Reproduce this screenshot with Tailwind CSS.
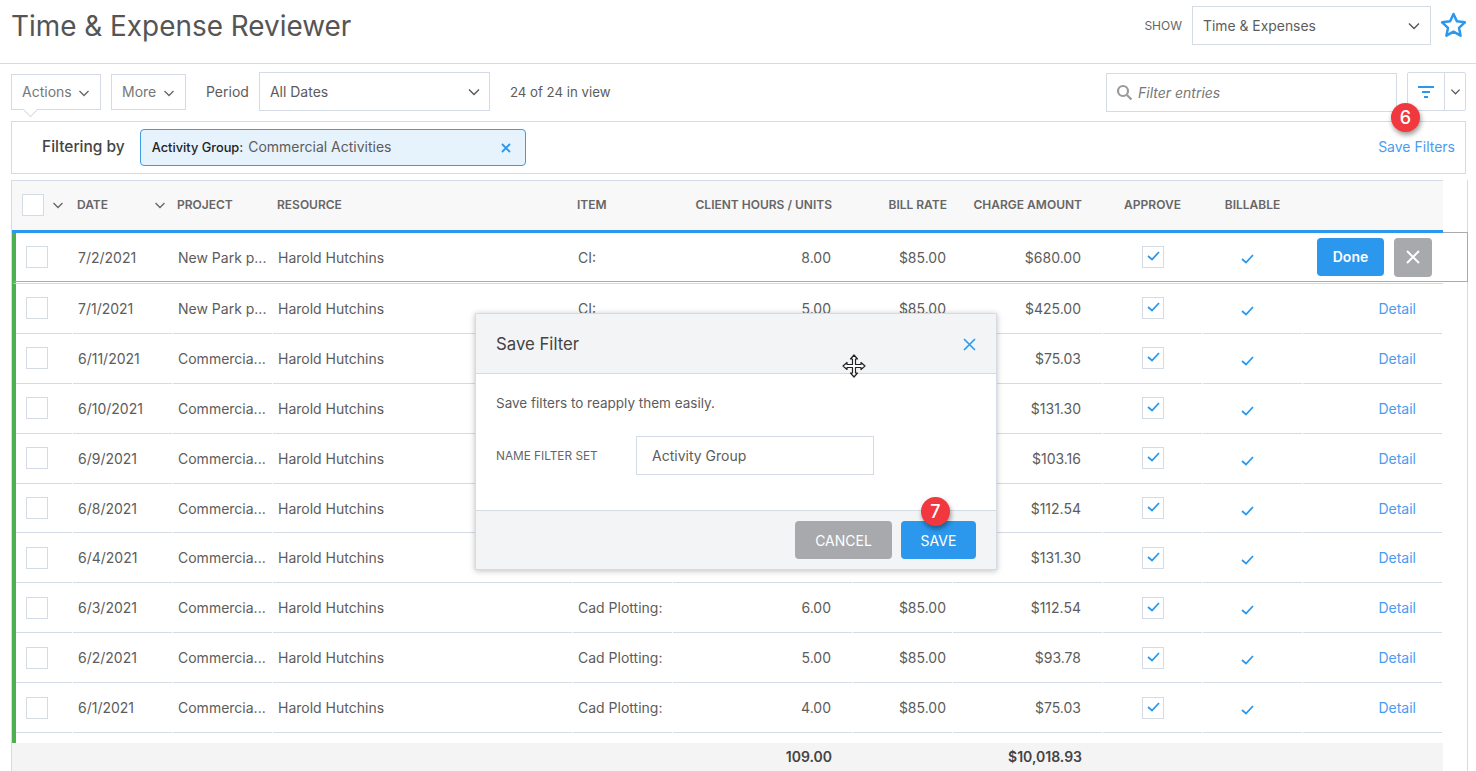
<!DOCTYPE html>
<html lang="en">

<head>
    <meta charset="UTF-8">
    <title>Time &amp; Expense Reviewer</title>
    <script src="https://cdn.jsdelivr.net/npm/@tailwindcss/browser@4"></script>
</head>

<body class="relative h-[771px] overflow-hidden bg-white font-['Inter',sans-serif] text-[14px] text-[#5c5c5c]">
    <!-- Page header -->
    <header class="h-[64px] border-b border-[#d5dbe5] flex items-start justify-between">
        <h1 class="ml-[11px] mt-[8px] text-[27.900px] leading-[36px] text-[#555]">Time &amp; Expense Reviewer</h1>
        <div class="flex items-center mt-[6px] mr-[9px]">
            <span class="text-[12px] text-[#666] mr-[10px]">SHOW</span>
            <div class="w-[239px] h-[39px] border border-[#d5dbe5] flex items-center justify-between pl-[10px] pr-[9px]">
                <span class="text-[13.900px] mt-[2px]">Time &amp; Expenses</span>
                <svg class="w-[14px] h-[14px]" viewBox="0 0 14 14" fill="none" stroke="#555" stroke-width="1.400"><path d="M2 4.500l5 5 5-5"/></svg>
            </div>
            <svg class="ml-[9px] w-[27px] h-[27px]" viewBox="0 0 27 27" fill="none" stroke="#2b98ee" stroke-width="2.500" stroke-linejoin="round"><path d="M13.500 2l3.400 7.300 8 1-5.900 5.500 1.600 7.900-7.100-4-7.100 4 1.600-7.900-5.900-5.500 8-1z"/></svg>
        </div>
    </header>

    <!-- Toolbar -->
    <div class="h-[57px] flex items-start pl-[11px] pr-[10px] pt-[9px]">
        <div class="relative mt-[1px] w-[90px] h-[36px] border border-[#d5dbe5] flex items-center justify-between pl-[10px] pr-[10px] pb-[1px] text-[#777]">
            <span>Actions</span>
            <svg class="w-[12px] h-[12px] mt-[2px]" viewBox="0 0 12 12" fill="none" stroke="#666" stroke-width="1.300"><path d="M1.500 4l4.500 4.500L10.500 4"/></svg>
            <span class="absolute left-[13px] top-[29px] w-[11px] h-[11px] rotate-45 bg-white border-r border-b border-[#d5dbe5]"></span>
        </div>
        <div class="ml-[10px] mt-[1px] w-[75px] h-[36px] border border-[#d5dbe5] flex items-center justify-between pl-[10px] pr-[10px] pb-[1px] text-[#777]">
            <span>More</span>
            <svg class="w-[12px] h-[12px] mt-[2px]" viewBox="0 0 12 12" fill="none" stroke="#666" stroke-width="1.300"><path d="M1.500 4l4.500 4.500L10.500 4"/></svg>
        </div>
        <span class="ml-[20px] mt-[10px] leading-[18px]">Period</span>
        <div class="ml-[10px] -mt-[1px] w-[231px] h-[39px] border border-[#d5dbe5] flex items-center justify-between pl-[10px] pr-[8px]">
            <span>All Dates</span>
            <svg class="w-[14px] h-[14px]" viewBox="0 0 14 14" fill="none" stroke="#555" stroke-width="1.300"><path d="M2 4.500l5 5 5-5"/></svg>
        </div>
        <span class="ml-[20px] mt-[10px] leading-[18px] text-[13.250px]">24 of 24 in view</span>
        <div class="ml-auto w-[291px] h-[39px] border border-[#d5dbe5] flex items-center pl-[9px]">
            <svg class="w-[17px] h-[17px]" viewBox="0 0 17 17" fill="none" stroke="#9a9a9a" stroke-width="2.200"><circle cx="7" cy="7" r="5"/><path d="M11 11l4.500 4.500"/></svg>
            <span class="ml-[5px] italic text-[#777]">Filter entries</span>
        </div>
        <div class="ml-[10px] -mt-[1px] w-[59px] h-[39px] border border-[#d5dbe5] rounded-[2px] flex">
            <div class="w-[37px] border-r border-[#d5dbe5] flex items-center justify-center">
                <svg class="w-[16px] h-[12px]" viewBox="0 0 16 12" fill="#2b98ee"><rect y="0" width="16" height="2"/><rect x="4" y="5" width="8" height="2"/><rect x="6" y="10" width="4" height="2"/></svg>
            </div>
            <div class="flex-1 flex items-center justify-center">
                <svg class="w-[11px] h-[11px]" viewBox="0 0 12 12" fill="none" stroke="#555" stroke-width="1.300"><path d="M1.500 4l4.500 4.500L10.500 4"/></svg>
            </div>
        </div>
    </div>

    <!-- Filter bar -->
    <div class="ml-[11px] mr-[10px] h-[53px] border border-[#d5dbe5] flex items-center pl-[30px] pr-[10px]">
        <span class="font-medium text-[#444] text-[15.500px] -mt-[1px]">Filtering by</span>
        <div class="ml-[15px] w-[386px] h-[37px] bg-[#e6f2fc] border border-[#3d9ce8] rounded-[4px] flex items-center pl-[11px] pr-[14px]">
            <span class="text-[12.800px] font-medium text-[#222]">Activity Group:</span>
            <span class="ml-[5px] -mt-[2px]">Commercial Activities</span>
            <svg class="ml-auto w-[10px] h-[10px]" viewBox="0 0 10 10" stroke="#2b98ee" stroke-width="1.800"><path d="M1 1l8 8M9 1l-8 8"/></svg>
        </div>
        <span class="ml-auto -mt-[2px] text-[#4a9cf0]">Save Filters</span>
    </div>

    <!-- Table -->
    <div class="relative ml-[11px] mt-[6px] mr-[8px] h-[591px] border-l border-r border-[#d5dbe5]">
        <div class="w-[1431px] h-[50px] bg-[#f8f8f8] border-t border-[#d5dbe5] pl-[4px] pb-[2px] grid grid-cols-[56px_99px_99px_299px_99px_179px_99px_149px_99px_99px_139px] gap-x-[1px] items-center text-[12px] font-semibold text-[#666]">
            <div class="pl-[6px] mt-[1px] flex items-center gap-[8px]">
                <span class="w-[22px] h-[22px] bg-white border border-[#d5dbe5]"></span>
                <svg class="w-[12px] h-[12px]" viewBox="0 0 12 12" fill="none" stroke="#666" stroke-width="1.300"><path d="M1.500 4l4.500 4.500L10.500 4"/></svg>
            </div>
            <div class="flex items-center pl-[4px] pr-[6px] justify-between"><span>DATE</span><svg class="w-[12px] h-[12px]" viewBox="0 0 12 12" fill="none" stroke="#666" stroke-width="1.300"><path d="M1.500 4l4.500 4.500L10.500 4"/></svg></div>
            <div class="pl-[4px]">PROJECT</div>
            <div class="pl-[4px]">RESOURCE</div>
            <div class="pl-[4px]">ITEM</div>
            <div class="text-right pr-[20px] whitespace-nowrap">CLIENT HOURS / UNITS</div>
            <div class="text-right pr-[5px]">BILL RATE</div>
            <div class="text-right pr-[20px]">CHARGE AMOUNT</div>
            <div class="text-center">APPROVE</div>
            <div class="text-center">BILLABLE</div>
            <div></div>
        </div>
        <div class="flex w-[1456px] h-[3px]">
            <div class="w-[1431px] bg-[#2b98ee]"></div>
            <div class="flex-1 border-b border-[#a9abae]"></div>
        </div>

        <!-- Row being edited -->
        <div class="w-[1456px] h-[49px] border-l-[4px] border-l-[#4caf50] border-r border-b border-r-[#a9abae] border-b-[#a9abae] grid grid-cols-[56px_99px_99px_299px_99px_179px_99px_149px_99px_99px_1fr] gap-x-[1px] items-center">
            <div class="pl-[10px]"><span class="block w-[22px] h-[22px] border border-[#d5dbe5]"></span></div>
            <div class="pl-[5px] pt-[1px]">7/2/2021</div>
            <div class="pl-[5px] pt-[1px] whitespace-nowrap">New Park p...</div>
            <div class="pl-[5px] pt-[1px]">Harold Hutchins</div>
            <div class="pl-[5px] pt-[1px]">CI:</div>
            <div class="text-right pr-[21px] pt-[1px]">8.00</div>
            <div class="text-right pr-[6px] pt-[1px]">$85.00</div>
            <div class="text-right pr-[21px] pt-[1px]">$680.00</div>
            <div class="pl-[39px]"><span class="w-[22px] h-[22px] border border-[#d5dbe5] flex items-center justify-center pb-[2px]"><svg class="w-[13px] h-[10px]" viewBox="0 0 13 10" fill="none" stroke="#2b98ee" stroke-width="1.800"><path d="M1 5l4 3.500L12 1"/></svg></span></div>
            <div class="pl-[38px] pt-[4px]"><svg class="w-[13px] h-[10px]" viewBox="0 0 13 10" fill="none" stroke="#2b98ee" stroke-width="1.800"><path d="M1 5l4 3.500L12 1"/></svg></div>
            <div class="flex gap-[10px] pl-[14px] items-start">
                <span class="w-[67px] h-[38px] rounded-[4px] bg-[#2b98ee] text-white font-semibold flex items-center justify-center">Done</span>
                <span class="w-[38px] h-[39px] rounded-[4px] bg-[#a7a9ac] flex items-center justify-center"><svg class="w-[14px] h-[14px]" viewBox="0 0 14 14" stroke="#fff" stroke-width="2"><path d="M1 1l12 12M13 1L1 13"/></svg></span>
            </div>
        </div>
        <div class="w-[1431px] h-[2px] border-b border-b-[#d5dbe5] border-l-[4px] border-l-[#4caf50]"></div>
        <div id="rows"></div>
        <div class="h-[9.900px] border-l-[4px] border-l-[#4caf50]"></div>

        <!-- Totals -->
        <div class="w-[1431px] h-[28px] bg-[#f4f4f4] pl-[4px] grid grid-cols-[56px_99px_99px_299px_99px_179px_99px_149px] gap-x-[1px] items-center font-semibold text-[#444]">
            <div></div><div></div><div></div><div></div><div></div>
            <div class="text-right pr-[20px]">109.00</div>
            <div></div>
            <div class="text-right pr-[20px]">$10,018.93</div>
        </div>
    </div>

    <!-- Numbered callouts -->
    <span class="absolute left-[1391px] top-[103px] w-[29px] h-[29px] rounded-full bg-[#f0383e] text-white text-[18px] font-medium flex items-center justify-center shadow-[1px_3px_5px_rgba(0,0,0,0.4)] z-20">6</span>

    <!-- Save Filter dialog -->
    <div class="absolute left-[475px] top-[313px] w-[522px] h-[257px] bg-white border border-[#d5dbe5] shadow-[0_1px_6px_rgba(0,0,0,0.25)] z-10">
        <div class="h-[60px] bg-[#f3f4f6] border-b border-[#d5dbe5] flex items-center justify-between pl-[20px] pr-[20px]">
            <span class="text-[16.750px] text-[#444] mt-[2px]">Save Filter</span>
            <svg class="w-[13px] h-[13px] mt-[2px]" viewBox="0 0 13 13" stroke="#2b98ee" stroke-width="1.600"><path d="M1 1l11 11M12 1L1 12"/></svg>
        </div>
        <div class="h-[136px] pl-[20px]">
            <p class="pt-[20px] leading-[18px] text-[13.500px]">Save filters to reapply them easily.</p>
            <div class="mt-[24px] flex items-center">
                <span class="w-[140px] text-[11.800px] text-[#666] pt-[3px]">NAME FILTER SET</span>
                <span class="w-[238px] h-[39px] border border-[#d5dbe5] pl-[15px] flex items-center">Activity Group</span>
            </div>
        </div>
        <div class="h-[59px] bg-[#f3f4f6] border-t border-[#d5dbe5] flex justify-end items-start gap-[9px] pr-[20px] pt-[10px]">
            <span class="w-[97px] h-[38px] rounded-[4px] bg-[#a7a9ac] text-white flex items-center justify-center">CANCEL</span>
            <span class="w-[75px] h-[38px] rounded-[4px] bg-[#2b98ee] text-white flex items-center justify-center">SAVE</span>
        </div>
        <span class="absolute left-[445px] top-[183px] w-[29px] h-[29px] rounded-full bg-[#f0383e] text-white text-[18px] font-medium flex items-center justify-center shadow-[1px_3px_5px_rgba(0,0,0,0.4)]">7</span>
        <!-- move cursor -->
        <svg class="absolute left-[366px] top-[40px] w-[24px] h-[24px]" viewBox="0 0 24 24" fill="#fff" stroke="#222" stroke-width="1.200" stroke-linejoin="round"><path d="M12 1l3.500 4h-2v5.500H19v-2l4 3.500-4 3.500v-2h-5.500V19h2L12 23l-3.500-4h2v-5.500H5v2L1 12l4-3.500v2h5.500V5h-2z"/></svg>
    </div>

    <script>
        // rows under the edited one
        const rows = [
            ['7/1/2021', 'New Park p...', 'CI:', '5.00', '$85.00', '$425.00'],
            ['6/11/2021', 'Commercia...', '', '', '', '$75.03'],
            ['6/10/2021', 'Commercia...', '', '', '', '$131.30'],
            ['6/9/2021', 'Commercia...', '', '', '', '$103.16'],
            ['6/8/2021', 'Commercia...', '', '', '', '$112.54'],
            ['6/4/2021', 'Commercia...', '', '', '', '$131.30'],
            ['6/3/2021', 'Commercia...', 'Cad Plotting:', '6.00', '$85.00', '$112.54'],
            ['6/2/2021', 'Commercia...', 'Cad Plotting:', '5.00', '$85.00', '$93.78'],
            ['6/1/2021', 'Commercia...', 'Cad Plotting:', '4.00', '$85.00', '$75.03'],
        ];
        const tick = '<svg class="w-[13px] h-[10px]" viewBox="0 0 13 10" fill="none" stroke="#2b98ee" stroke-width="1.800"><path d="M1 5l4 3.500L12 1"/></svg>';
        const cell = 'border-b border-[#d5dbe5] flex items-center';
        document.getElementById('rows').innerHTML = rows.map(r => `
            <div class="w-[1431px] h-[49.900px] border-l-[4px] border-[#4caf50] grid grid-cols-[56px_99px_99px_299px_99px_179px_99px_149px_99px_99px_139px] gap-x-[1px]">
                <div class="${cell} pl-[10px]"><span class="block w-[22px] h-[22px] border border-[#d5dbe5]"></span></div>
                <div class="${cell} pl-[5px]">${r[0]}</div>
                <div class="${cell} pl-[5px]">${r[1]}</div>
                <div class="${cell} pl-[5px]">Harold Hutchins</div>
                <div class="${cell} pl-[5px] whitespace-nowrap">${r[2]}</div>
                <div class="${cell} justify-end pr-[21px]">${r[3]}</div>
                <div class="${cell} justify-end pr-[6px]">${r[4]}</div>
                <div class="${cell} justify-end pr-[21px]">${r[5]}</div>
                <div class="${cell} pl-[39px]"><span class="w-[22px] h-[22px] border border-[#d5dbe5] flex items-center justify-center pb-[2px]">${tick}</span></div>
                <div class="${cell} pl-[38px] pt-[5px]">${tick}</div>
                <div class="${cell} justify-end pr-[26px] text-[#4a9cf0]">Detail</div>
            </div>`).join('');
    </script>
</body>

</html>
